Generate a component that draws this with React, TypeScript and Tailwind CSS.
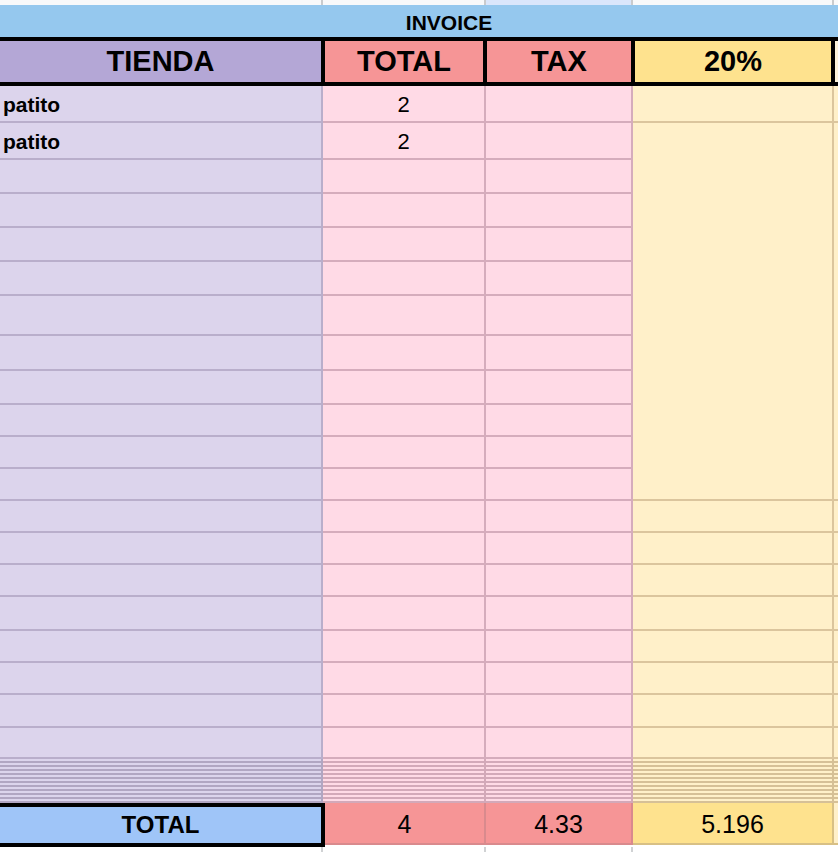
import React from "react";

const dataRows = 20;
const squeezedRows = 11;

const App: React.FC = () => {
  const rows = Array.from({ length: dataRows }, (_, i) => i);
  const mini = Array.from({ length: squeezedRows }, (_, i) => i);

  return (
    <div className="w-[838px] h-[852px] overflow-hidden bg-white text-black font-['Liberation_Sans',Arial,sans-serif]">
      {/* column header strip */}
      <div className="flex h-[5px] bg-[#f8f9fa]">
        <div className="w-[323px] border-r-2 border-[#c9cbcd]" />
        <div className="w-[163px] border-r-2 border-[#c9cbcd]" />
        <div className="w-[147px] border-r-2 border-[#c9cbcd] bg-[#dae6fb]" />
        <div className="w-[201px] border-r-2 border-[#c9cbcd]" />
        <div className="flex-1" />
      </div>

      {/* title band */}
      <div className="flex h-[32px] items-center justify-center bg-[#95c8ee] pl-[60px] pt-[3px] text-[21px] font-bold leading-none">
        INVOICE
      </div>

      {/* header row */}
      <div className="flex h-[49px] border-y-4 border-black text-[29px] font-bold leading-none">
        <div className="flex w-[325px] items-center justify-center border-r-4 border-black bg-[#b4a7d6]">TIENDA</div>
        <div className="flex w-[162px] items-center justify-center border-r-4 border-black bg-[#f69596]">TOTAL</div>
        <div className="flex w-[148px] items-center justify-center border-r-4 border-black bg-[#f69596]">TAX</div>
        <div className="flex w-[200px] items-center justify-center border-r-4 border-black bg-[#fee28e]">20%</div>
        <div className="flex-1 bg-[#fdf3da]" />
      </div>

      {/* data rows */}
      <div className="grid grid-cols-[323px_163px_147px_201px_1fr] grid-rows-[37px_37px_34px_34px_34px_34px_40px_35px_34px_32px_32px_32px_32px_32px_32px_34px_32px_32px_33px_31px]">
        {rows.map((i) => (
          <React.Fragment key={i}>
            <div className="col-start-1 flex items-center border-b-2 border-r-2 border-[#b9aecb] bg-[#dcd4ec] pl-[3px] pt-[1px] text-[21px] font-bold leading-none">
              {i < 2 ? "patito" : ""}
            </div>
            <div className="col-start-2 flex items-center justify-center border-b-2 border-r-2 border-[#d5acbc] bg-[#ffdae6] pt-[2px] text-[22px] leading-none">
              {i < 2 ? "2" : ""}
            </div>
            <div className="col-start-3 border-b-2 border-r-2 border-[#d5acbc] bg-[#ffdae6]" />
            {i === 0 && (
              <>
                <div className="col-start-4 border-b-2 border-r-2 border-[#dbc59d] bg-[#fff0c9]" />
                <div className="col-start-5 border-b-2 border-[#dbc59d] bg-[#fff0c9]" />
              </>
            )}
            {i === 1 && (
              <>
                <div className="col-start-4 row-span-11 border-b-2 border-r-2 border-[#dbc59d] bg-[#fff0c9]" />
                <div className="col-start-5 row-span-11 border-b-2 border-[#dbc59d] bg-[#fff0c9]" />
              </>
            )}
            {i > 11 && (
              <>
                <div className="col-start-4 border-b-2 border-r-2 border-[#dbc59d] bg-[#fff0c9]" />
                <div className="col-start-5 border-b-2 border-[#dbc59d] bg-[#fff0c9]" />
              </>
            )}
          </React.Fragment>
        ))}
      </div>

      {/* squeezed hidden rows */}
      {mini.map((i) => (
        <div key={i} className="flex h-[4px]">
          <div className="w-[323px] border-b-2 border-r-2 border-[#b1a6c2] bg-[#dcd4ec]" />
          <div className="w-[163px] border-b-2 border-r-2 border-[#d3a9b9] bg-[#ffdae6]" />
          <div className="w-[147px] border-b-2 border-r-2 border-[#d3a9b9] bg-[#ffdae6]" />
          <div className="w-[201px] border-b-2 border-r-2 border-[#d6c097] bg-[#fff0c9]" />
          <div className="flex-1 border-b-2 border-[#d6c097] bg-[#fff0c9]" />
        </div>
      ))}

      {/* totals row */}
      <div className="flex h-[44px] items-start leading-none">
        <div className="flex h-[44px] w-[325px] items-center justify-center border-y-4 border-r-4 border-black bg-[#9fc5f8] text-[24px] font-bold">
          TOTAL
        </div>
        <div className="flex h-[42px] w-[161px] items-center justify-center border-b-2 border-r-2 border-[#d98a8d] bg-[#f69596] pt-[2px] text-[25px]">
          4
        </div>
        <div className="flex h-[42px] w-[147px] items-center justify-center border-b-2 border-r-2 border-[#d98a8d] bg-[#f69596] pt-[2px] text-[25px]">
          4.33
        </div>
        <div className="flex h-[42px] w-[201px] items-center justify-center border-b-2 border-r-2 border-[#d8c085] bg-[#fee28e] pt-[2px] text-[25px]">
          5.196
        </div>
        <div className="h-[42px] flex-1 border-b-2 border-[#d8c085] bg-[#fff0c9]" />
      </div>

      {/* empty row below */}
      <div className="flex h-[10px]">
        <div className="w-[323px] border-r-2 border-[#d0d2d4]" />
        <div className="w-[163px] border-r-2 border-[#d0d2d4]" />
        <div className="w-[147px] border-r-2 border-[#d0d2d4]" />
        <div className="flex-1" />
      </div>
    </div>
  );
};

export default App;
